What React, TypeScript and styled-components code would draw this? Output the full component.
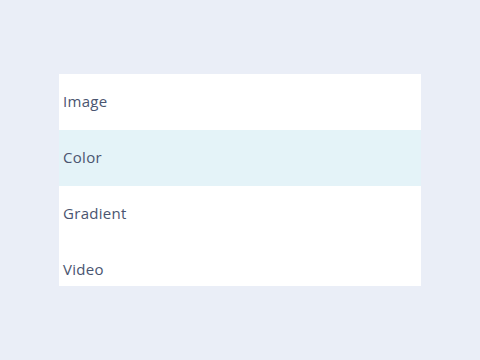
import styled, { createGlobalStyle } from 'styled-components';

const GlobalStyle = createGlobalStyle`
  html, body {
    margin: 0;
    padding: 0;
    background: #eaeef7;
  }
  body {
    font-family: "Open Sans", "Liberation Sans", sans-serif;
  }
`;

const options = ['Image', 'Color', 'Gradient', 'Video'];

const App = () => {
  const active = 'Color';

  return (
    <>
      <GlobalStyle />
      <Styled.Page>
        <Styled.List>
          {options.map((option) => (
            <Styled.Item key={option} $active={option === active}>
              {option}
            </Styled.Item>
          ))}
        </Styled.List>
      </Styled.Page>
    </>
  );
};

const Styled = {
  Page: styled.div`
    width: 480px;
    height: 360px;
    padding: 74px 0 0 59px;
    box-sizing: border-box;
  `,
  List: styled.ul`
    list-style: none;
    margin: 0;
    padding: 0;
    width: 362px;
    height: 212px;
    overflow: hidden;
    background: #ffffff;
  `,
  Item: styled.li<{ $active: boolean }>`
    display: flex;
    align-items: center;
    height: 56px;
    padding: 0 0 2px 4px;
    box-sizing: border-box;
    font-size: 15px;
    letter-spacing: 0.3px;
    color: #4a5570;
    background: ${(props) => (props.$active ? '#e4f3f8' : '#ffffff')};
    cursor: pointer;
  `,
};

export default App;
